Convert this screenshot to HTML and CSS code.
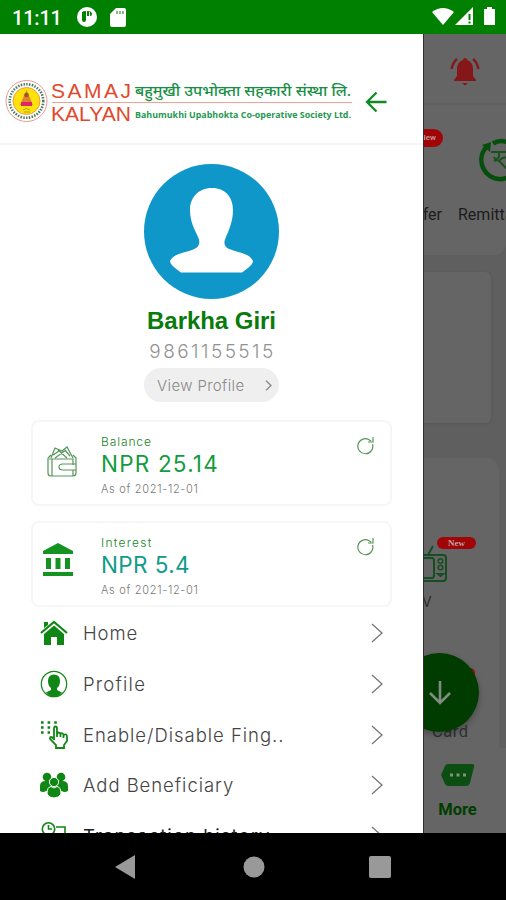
FILE: index.html
```html
<!DOCTYPE html>
<html lang="en">
<head>
<meta charset="utf-8">
<title>Samaj Kalyan</title>
<link rel="stylesheet" href="styles.css">
</head>
<body>
<div class="phone">
  <header class="status">
    <span class="clock">11:11</span>
    <svg class="st-app" width="20" height="20" viewBox="0 0 20 20"><circle cx="10" cy="10" r="10" fill="#fff"/><path d="M5 5Q6 4 9 4V13Q9 15 7 15Q5 15 5 13ZM10 4Q15 4 15 7Q15 9 13 9V5H12V9H10Z" fill="#008000"/></svg>
    <svg class="st-sd" width="16" height="19" viewBox="0 0 16 19"><path d="M6 0H14Q16 0 16 2V17Q16 19 14 19H2Q0 19 0 17V6Z" fill="#fff"/><path d="M7 3v3M10 3v3M13 3v3" stroke="#5da75d" stroke-width="1.500"/></svg>
    <span class="grow"></span>
    <svg width="64" height="20" viewBox="0 0 64 20"><path d="M0 5Q11-3 22 5L11 18Z" fill="#fff"/><path d="M23 18L41 0V18Z" fill="#fff"/><path d="M37.500 7v6M37.500 14.500v2" stroke="#008000" stroke-width="2"/><path d="M52 2h3V0h5v2h3V18H52Z" fill="#fff"/></svg>
  </header>

  <main class="stage">
    <aside class="drawer">
      <div class="brand">
        <svg width="353" height="50" viewBox="0 0 353 50">
          <circle cx="26.500" cy="26" r="20.500" fill="#fff" stroke="#e89a92"/>
          <circle cx="26.500" cy="26" r="16.800" fill="none" stroke="#4d7a60" stroke-width="2.600" stroke-dasharray="1.500 1.300"/>
          <circle cx="26.500" cy="26" r="13.500" fill="#ffe20a" stroke="#eb9c49"/>
          <path d="M26.500 15L30 23L33 30H20L23 23Z" fill="#e5812b"/><circle cx="26.500" cy="20" r="2.300" fill="#9b572e"/>
          <path d="M21 27H32V31H21Z" fill="#dc2868"/><path d="M23 35Q26 32 30 35M24 37H30" stroke="#a9a01c" fill="none"/>
          <text class="lg-red" x="51" y="22.500" textLength="80" lengthAdjust="spacing">SAMAJ</text>
          <text class="lg-red" x="51" y="46" textLength="80" lengthAdjust="spacingAndGlyphs">KALYAN</text>
          <path d="M52 27.500H352" stroke="#f3a190"/>
          <text class="lg-np" x="135" y="20.500" textLength="216" lengthAdjust="spacingAndGlyphs">बहुमुखी उपभोक्ता सहकारी संस्था लि.</text>
          <text class="lg-en" x="135" y="42.500" textLength="216" lengthAdjust="spacingAndGlyphs">Bahumukhi Upabhokta Co-operative Society Ltd.</text>
        </svg>
        <svg class="back" width="22" height="22" viewBox="0 0 22 22"><path d="M21.500 11H2M11.500 1.500L2 11L11.500 20.500" fill="none" stroke="#118a24" stroke-width="2.300"/></svg>
      </div>

      <section class="user">
        <svg width="135" height="135" viewBox="0 0 135 135"><circle cx="67.500" cy="67.500" r="67.500" fill="#1097c9"/><path d="M68 24C54 24 46 34 46 46C46 58 51 66 54 73C57 79 55 84 48 86C39 89 29 90 26 97Q26 100 31 104L37 108.500H98L104 104Q109 100 109 97C106 90 97 89 88 86C80 84 79 79 82 73C85 66 89 57 89 46C89 34 82 24 68 24Z" fill="#fff"/></svg>
        <h1 class="name">Barkha Giri</h1>
        <p class="phone-no">9861155515</p>
        <button class="view"><span>View Profile</span><svg width="7" height="11" viewBox="0 0 7 11"><path d="M1 .8L6 5.500L1 10.200" fill="none" stroke="#888" stroke-width="1.300"/></svg></button>
      </section>

      <section class="cards">
        <article class="card">
          <svg class="wallet" width="30" height="32" viewBox="0 0 30 32" fill="none" stroke="#55955a" stroke-width="1.200"><path d="M1 12V27Q1 30 4 30H26Q29 30 29 27V12L26 9M1 12L4 9M2 13H26V19M26 24V30M29 18H16Q12 18 12 21Q12 24 16 24H29M4 12L8 2L15 5L20 1L26 12M8 12L19 4M11 4L20 12M6 9L12 5M18 4L23 10M5 13V30"/></svg>
          <div class="info"><span class="label">Balance</span><strong class="amount green">NPR 25.14</strong><small>As of 2021-12-01</small></div>
          <svg class="refresh" width="17" height="18" viewBox="0 0 17 18"><path d="M15.500 7A7.500 7.500 0 1 1 12 2.700L14 4M16 0V5H11" fill="none" stroke="#55955a" stroke-width="1.200"/></svg>
        </article>
        <article class="card">
          <svg class="bank" width="32" height="34" viewBox="0 0 32 34"><path d="M16 0L31 8V11H1V8ZM4 15H9V26H4ZM13.500 15H18.500V26H13.500ZM23 15H28V26H23ZM1 29H31V33H1Z" fill="#159322"/></svg>
          <div class="info"><span class="label interest">Interest</span><strong class="amount teal">NPR 5.4</strong><small>As of 2021-12-01</small></div>
          <svg class="refresh" width="17" height="18" viewBox="0 0 17 18"><path d="M15.500 7A7.500 7.500 0 1 1 12 2.700L14 4M16 0V5H11" fill="none" stroke="#55955a" stroke-width="1.200"/></svg>
        </article>
      </section>

      <nav class="menu">
        <a class="row"><svg class="ico" viewBox="0 0 28 28"><path d="M1 14L14 3L27 14" fill="none" stroke="#108714" stroke-width="2.200"/><path d="M4 3H8V6L4 9ZM14 6.500L24 15V26H17V18H11V26H4V15Z" fill="#108714"/></svg><span class="t1">Home</span><svg class="chev" viewBox="0 0 12 20"><path d="M1 1L11 10L1 19"/></svg></a>
        <a class="row"><svg class="ico" viewBox="0 0 28 28"><circle cx="14" cy="14" r="12.700" fill="#fff" stroke="#108714" stroke-width="1.200"/><path d="M14 4.500Q20 4.500 20 11Q20 16 17 18V20L22 22.500Q18 27 14 27Q10 27 6 22.500L11 20V18Q8 16 8 11Q8 4.500 14 4.500Z" fill="#108714"/></svg><span class="t2">Profile</span><svg class="chev" viewBox="0 0 12 20"><path d="M1 1L11 10L1 19"/></svg></a>
        <a class="row"><svg class="ico" viewBox="0 0 28 28" fill="none" stroke="#108714"><path d="M1 1.500H17M1 6.500H12M1 11.500H10" stroke-width="2.600" stroke-dasharray="2.600 4"/><path d="M14 19V7.500Q14 5.500 15.500 5.500Q17 5.500 17 7.500V13Q18.500 10 20.500 13Q22.500 11 23.500 14Q27 12 27 16V20L24 24V27H16V24L10 18Q10 14 14 18M17 13V16M20.500 13V16M23.500 14V17" stroke-width="1.800"/></svg><span class="t3">Enable/Disable Fing..</span><svg class="chev" viewBox="0 0 12 20"><path d="M1 1L11 10L1 19"/></svg></a>
        <a class="row"><svg class="ico" viewBox="0 0 28 28" fill="#108714"><circle cx="7" cy="6" r="4.300"/><circle cx="21" cy="6" r="4.300"/><path d="M0 20V15Q0 10 6 10H22Q28 10 28 15V20Q24 22 22 20H6Q3 22 0 20Z"/><g stroke="#fff"><circle cx="14" cy="11" r="4.600"/><path d="M7 23Q7 16 11 15.500L14 17L17 15.500Q21 16 21 23Q19 27 14 27Q9 27 7 23Z"/></g></svg><span class="t4">Add Beneficiary</span><svg class="chev" viewBox="0 0 12 20"><path d="M1 1L11 10L1 19"/></svg></a>
        <a class="row"><svg class="ico" viewBox="0 0 28 28" fill="none" stroke="#108714" stroke-width="1.600"><circle cx="8.500" cy="7" r="6.200"/><path d="M8.500 3V7H12M16 5H25V25H5V15"/></svg><span class="t5">Transaction history</span><svg class="chev" viewBox="0 0 12 20"><path d="M1 1L11 10L1 19"/></svg></a>
      </nav>
    </aside>

    <div class="behind">
      <div class="top"><svg width="30" height="28" viewBox="0 0 30 28"><path d="M15 0Q17 0 17 2Q23 4 23 11V18L26 22V23H4V22L7 18V11Q7 4 13 2Q13 0 15 0ZM12 25H18L15 27.500Z" fill="#851719"/><path d="M7 1Q3 4 1.500 11M23 1Q27 4 28.500 11" fill="none" stroke="#851719" stroke-width="2.400"/></svg></div>
      <div class="services">
        <span class="badge b1">New</span>
        <svg class="remit" width="29" height="46" viewBox="0 0 29 46"><path d="M8 9.500A19.200 19.200 0 0 0 22 41.200Q26 41.200 30 39.500M15 5.500Q22 1 30 4.500" fill="none" stroke="#064e0b" stroke-width="4.500"/><path d="M4 7L13 4L12 14Z" fill="#064e0b"/><path d="M13 14H30M21 14V18Q21 21 17 21L16 19M16 23Q20 21 23 25M23 25L30 32M21 23Q25 18 30 20" fill="none" stroke="#16541c" stroke-width="2"/></svg>
        <div class="svc-names"><span class="transfer">Transfer</span><span>Remittance</span></div>
      </div>
      <div class="banner"></div>
      <div class="grid">
        <span class="badge b2">New</span>
        <svg class="tv" width="26" height="40" viewBox="0 0 26 40" fill="none" stroke="#174d22" stroke-width="2"><path d="M0 12H19Q22 12 22 15V35Q22 38 19 38H0M0 15H8Q10 15 10 18V32Q10 35 8 35H0M4 12L9 3"/><circle cx="16.500" cy="18" r="2.300" stroke-width="1.500"/><circle cx="16.500" cy="24.500" r="2.300" stroke-width="1.500"/><path d="M14 31H19L16.500 33Z"/></svg>
        <span class="tv-name">TV</span>
        <span class="card-name">Card</span>
      </div>
      <div class="more"><svg width="34" height="22" viewBox="0 0 34 22"><path d="M7 0H31Q34 0 33 3L29 19Q28 22 25 22H7Q5 22 4 20L0 11L4 2Q5 0 7 0Z" fill="#0c4e12"/><path d="M9 11h3M15.500 11h3M22 11h3" stroke="#83907f" stroke-width="3"/></svg><span>More</span></div>
      <i class="red-dot"></i>
      <div class="fab"><svg width="22" height="24" viewBox="0 0 22 24"><path d="M11 0V22M1 12L11 22L21 12" fill="none" stroke="#7f8c7f" stroke-width="2.600"/></svg></div>
    </div>
  </main>

  <footer class="sysnav">
    <svg width="20" height="24" viewBox="0 0 20 24"><path d="M0 12L20 0V24Z" fill="#999"/></svg>
    <svg class="home-dot" width="22" height="22" viewBox="0 0 22 22"><circle cx="11" cy="11" r="10.500" fill="#999"/></svg>
    <svg width="22" height="22" viewBox="0 0 22 22"><rect width="22" height="22" rx="2" fill="#999"/></svg>
  </footer>
</div>
</body>
</html>
```
FILE: styles.css
```css
* { box-sizing: border-box; }
body { margin: 0; font-family: Inter, "Liberation Sans", sans-serif; font-weight: 300; }
svg { display: block; flex: none; }
.phone { width: 506px; height: 900px; overflow: hidden; display: flex; flex-direction: column; }

.status { height: 34px; flex: none; background: #008000; display: flex; align-items: center; padding: 0 10px 0 12px; }
.clock { color: #fff; font: 500 20px/34px Roboto, sans-serif; letter-spacing: -.2px; width: 65px; padding-top: 2px; }
.st-sd { margin-left: 13px; }
.grow { flex: 1; }

.stage { height: 799px; flex: none; display: flex; overflow: hidden; }
.drawer { width: 423px; flex: none; background: #fff; height: 799px; overflow: hidden; }
.brand { height: 111px; border-bottom: 2px solid #f6f6f6; display: flex; padding-top: 41px; }
.back { margin: 16px 0 0 12px; }
.lg-red { font: 400 21px "Liberation Sans", sans-serif; fill: #e2492c; }
.lg-np { font: 500 15px "Noto Sans", "Noto Sans Devanagari", sans-serif; fill: #168f43; }
.lg-en { font: 700 9px "Open Sans", sans-serif; fill: #259850; }

.user { display: flex; flex-direction: column; align-items: center; padding-top: 19px; height: 275px; }
.name { margin: 6px 0 0; font: 700 24px/32px "Liberation Sans", sans-serif; color: #087b0b; letter-spacing: -.05px; }
.phone-no { margin: 0; height: 31px; font-size: 19px; line-height: 30px; color: #929292; letter-spacing: 2.450px; padding-left: 2px; }
.view { border: 0; width: 135px; height: 34px; border-radius: 17px; background: #efefef; padding: 0 7px 0 13px; display: flex; align-items: center; justify-content: space-between; font: 300 15px Inter, sans-serif; color: #888; letter-spacing: .4px; }

.cards { display: flex; flex-direction: column; gap: 15px; padding: 0 31px; }
.card { height: 86px; border: 2px solid #f6f6f6; border-radius: 8px; display: flex; padding: 11px 16px 0 0; }
.wallet { width: 30px; margin: 13px 0 0 14px; }
.bank { margin: 9px 0 0 9px; }
.info { display: flex; flex-direction: column; flex: 1; margin-left: 24px; }
.bank + .info { margin-left: 27px; }
.label { font-size: 12px; line-height: 17px; color: #178327; letter-spacing: .9px; }
.interest { letter-spacing: 1.250px; }
.amount { font-size: 22.500px; line-height: 29px; font-weight: 400; margin-top: -1px; }
.green { color: #129b3f; letter-spacing: 1.200px; }
.teal { color: #109b89; letter-spacing: .4px; }
.info small { font-size: 11px; line-height: 15px; color: #777; margin-top: 4px; letter-spacing: .7px; }
.refresh { margin-top: 4px; }

.menu { margin-top: 1px; }
.row { height: 50.700px; display: flex; align-items: center; padding: 0 40px; color: #444; font-size: 18.500px; }
.row span { flex: 1; margin-left: 15px; white-space: nowrap; }
.ico { width: 28px; height: 28px; }
.chev { width: 12px; height: 20px; fill: none; stroke: #777; stroke-width: 1.300; }
.t1 { letter-spacing: .9px; }
.t2 { letter-spacing: 1.200px; }
.t3 { letter-spacing: .970px; }
.t4 { letter-spacing: .950px; }
.row .t5 { color: #222; letter-spacing: 1.050px; font-weight: 400; }

.behind { position: relative; width: 83px; flex: none; background: #5f5f5f; overflow: hidden; border-left: 1px solid #303030; font: 400 15px Roboto, sans-serif; color: #1c1c1c; }
.top { height: 71px; border-bottom: 2px solid #606060; background: #656565; padding: 24px 0 0 26px; }
.services { position: relative; height: 150px; background: #656565; border-radius: 0 0 12px 0; padding-top: 33px; }
.remit { margin-left: 54px; }
.svc-names { display: flex; margin: 21px 0 0 -38px; gap: 16px; white-space: nowrap; font-size: 16px; line-height: 20px; }
.transfer { width: 56px; direction: rtl; }
.badge { position: absolute; background: #a00507; color: #c3a0a0; border-radius: 10px; text-align: center; font-weight: 500; }
.b1 { left: -23px; top: 24px; width: 42px; height: 18px; font-size: 8px; line-height: 18px; padding-left: 12px; }
.banner { margin-top: 17px; width: 67px; height: 151px; background: #656565; border-radius: 0 6px 6px 0; box-shadow: 0 1px 3px #555; }
.grid { position: relative; margin-top: 35px; width: 75px; height: 290px; background: #656565; border-radius: 0 12px 0 0; padding-top: 85px; }
.b2 { left: 13px; top: 79px; width: 39px; height: 12px; font: 700 9px/12px "Liberation Serif", serif; }
.tv-name { display: block; margin: 9px 0 0 -11px; line-height: 20px; color: #303030; }
.card-name { display: block; margin: 110px 0 0 8px; font-size: 16.500px; line-height: 20px; color: #303030; letter-spacing: .5px; }
.more { width: 82px; height: 85px; background: #656565; display: flex; flex-direction: column; align-items: center; padding: 16px 15px 0 0; }
.more span { margin-top: 14px; font-weight: 700; font-size: 16.500px; line-height: 20px; color: #003e00; }
.red-dot { position: absolute; left: 41px; top: 634px; width: 10px; height: 12px; border-radius: 6px; background: #8e1509; }
.fab { position: absolute; left: -24px; top: 619px; width: 79px; height: 79px; border-radius: 50%; background: #003c00; display: grid; place-items: center; box-shadow: 0 3px 6px #0004; }

.sysnav { height: 67px; flex: none; background: #000; display: flex; justify-content: space-between; padding: 0 115px; align-items: center; }
.home-dot { margin-left: 3px; }
```
